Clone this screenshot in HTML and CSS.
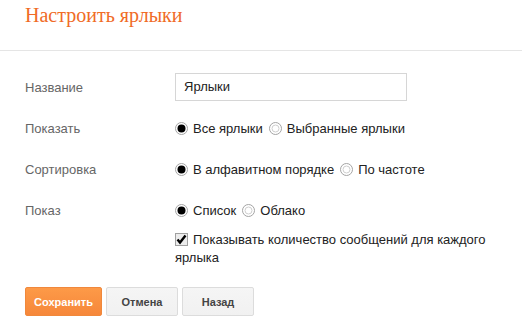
FILE: index.html
```html
<!DOCTYPE html>
<html lang="ru">
<head>
<meta charset="utf-8">
<link rel="stylesheet" href="styles.css">
</head>
<body>
<div class="header"><h1 class="title">Настроить ярлыки</h1></div>
<div class="form">
  <div class="row">
    <div class="label">Название</div>
    <div class="control"><div class="input">Ярлыки</div></div>
  </div>
  <div class="row">
    <div class="label">Показать</div>
    <div class="control">
      <span class="opt"><svg class="radio" viewBox="0 0 13 13" width="13" height="13"><circle cx="6.5" cy="6.5" r="6" fill="#fff" stroke="#a4a4a4"/><circle cx="6.5" cy="6.5" r="4" fill="#000"/></svg>Все ярлыки</span>
      <span class="opt"><svg class="radio" viewBox="0 0 13 13" width="13" height="13"><circle cx="6.5" cy="6.5" r="6" fill="#fff" stroke="#a4a4a4"/><circle cx="6.5" cy="6.5" r="3.5" fill="#fff" stroke="#cfcfcf"/></svg>Выбранные ярлыки</span>
    </div>
  </div>
  <div class="row">
    <div class="label">Сортировка</div>
    <div class="control">
      <span class="opt"><svg class="radio" viewBox="0 0 13 13" width="13" height="13"><circle cx="6.5" cy="6.5" r="6" fill="#fff" stroke="#a4a4a4"/><circle cx="6.5" cy="6.5" r="4" fill="#000"/></svg>В алфавитном порядке</span>
      <span class="opt"><svg class="radio" viewBox="0 0 13 13" width="13" height="13"><circle cx="6.5" cy="6.5" r="6" fill="#fff" stroke="#a4a4a4"/><circle cx="6.5" cy="6.5" r="3.5" fill="#fff" stroke="#cfcfcf"/></svg>По частоте</span>
    </div>
  </div>
  <div class="row">
    <div class="label">Показ</div>
    <div class="control">
      <span class="opt"><svg class="radio" viewBox="0 0 13 13" width="13" height="13"><circle cx="6.5" cy="6.5" r="6" fill="#fff" stroke="#a4a4a4"/><circle cx="6.5" cy="6.5" r="4" fill="#000"/></svg>Список</span>
      <span class="opt"><svg class="radio" viewBox="0 0 13 13" width="13" height="13"><circle cx="6.5" cy="6.5" r="6" fill="#fff" stroke="#a4a4a4"/><circle cx="6.5" cy="6.5" r="3.5" fill="#fff" stroke="#cfcfcf"/></svg>Облако</span>
    </div>
  </div>
  <div class="row row-check">
    <div class="label"></div>
    <div class="control check-text"><svg class="check" viewBox="0 0 13 13" width="13" height="13"><rect x="0.5" y="0.5" width="12" height="12" fill="#ececec" stroke="#a0a0a0"/><path d="M2.5 6.5 L5 9.5 L10.5 2.5" fill="none" stroke="#000" stroke-width="2.4"/></svg>Показывать количество сообщений для каждого ярлыка</div>
  </div>
  <div class="buttons">
    <button class="btn btn-primary">Сохранить</button>
    <button class="btn">Отмена</button>
    <button class="btn">Назад</button>
  </div>
</div>
</body>
</html>
```
FILE: styles.css
```css
html, body {
  margin: 0;
  padding: 0;
  background: #fff;
}
body {
  font-family: "Liberation Sans", Arial, sans-serif;
  font-size: 13px;
  color: #222;
}
.header {
  height: 51px;
  border-bottom: 1px solid #e5e5e5;
  padding-left: 25px;
  box-sizing: border-box;
}
.title {
  margin: 0;
  padding-top: 3px;
  font-family: "Liberation Serif", "Times New Roman", serif;
  font-weight: normal;
  font-size: 20px;
  line-height: 24px;
  color: #f06b26;
}
.form {
  padding: 22px 0 0 25px;
}
.row {
  display: grid;
  grid-template-columns: 150px 1fr;
  align-items: center;
  min-height: 28px;
  margin-bottom: 13px;
}
.label {
  color: #666;
}
.control {
  display: flex;
  align-items: center;
  gap: 6px;
}
.input {
  width: 232px;
  height: 28px;
  box-sizing: border-box;
  border: 1px solid #d6d6d6;
  padding: 0 8px;
  line-height: 26px;
  color: #222;
}
.opt {
  display: inline-flex;
  align-items: center;
}
.radio {
  margin-right: 5px;
}
.row-check {
  margin-top: -6px;
  align-items: start;
}
.check-text {
  display: block;
  line-height: 18px;
  width: 330px;
}
.check {
  vertical-align: -2px;
  margin-right: 5px;
}
.buttons {
  display: flex;
  gap: 4px;
  margin-top: 20px;
}
.btn {
  width: 72px;
  height: 29px;
  border: 1px solid #dcdcdc;
  border-radius: 2px;
  background: linear-gradient(#f5f5f5, #f1f1f1);
  font-family: "Liberation Sans", Arial, sans-serif;
  font-size: 11px;
  font-weight: bold;
  color: #444;
  padding: 0;
}
.btn-primary {
  width: 77px;
  border-color: #f0883c;
  background: linear-gradient(#fd9a48, #f6873a);
  color: #fff;
}
```
